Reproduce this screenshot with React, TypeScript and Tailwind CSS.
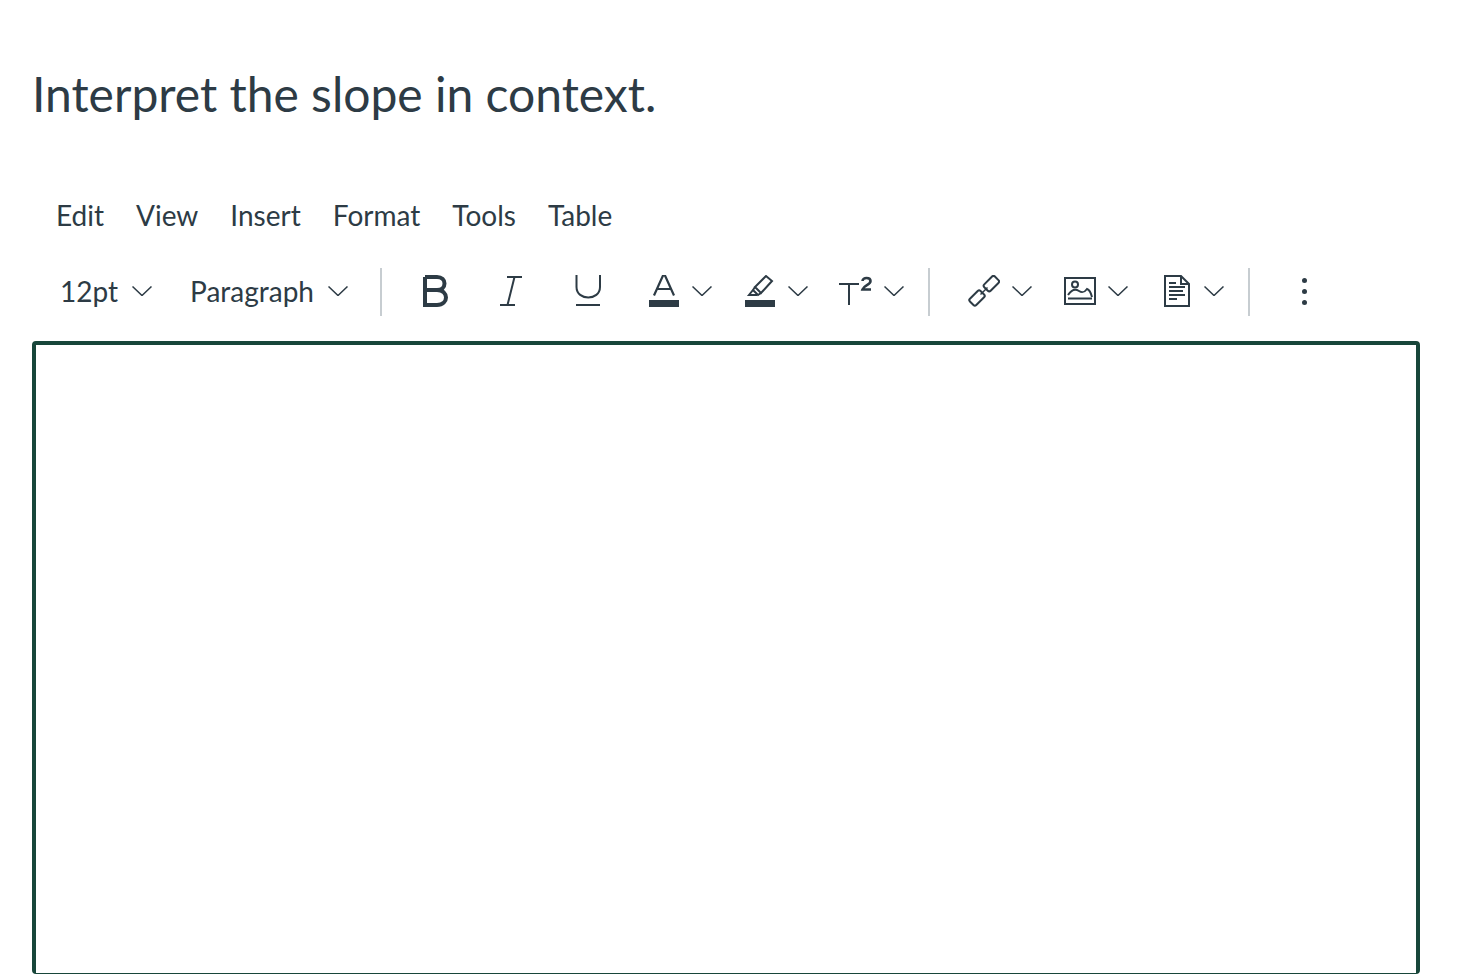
import React from 'react';

const Chevron: React.FC<{ className?: string }> = ({ className = '' }) => (
  <svg width="20" height="10" viewBox="0 0 20 10" fill="none" stroke="#2d3b45" strokeWidth="1.5" className={`shrink-0 ${className}`}>
    <path d="M0.5 0.5 L10 9.5 L19.5 0.5" />
  </svg>
);

const Separator: React.FC<{ className?: string }> = ({ className = '' }) => (
  <div className={`h-12 w-0.5 shrink-0 self-start bg-[#c7cdd1] ${className}`} />
);

const menuItems = ['Edit', 'View', 'Insert', 'Format', 'Tools', 'Table'];

const App: React.FC = () => {
  return (
    <div className="h-[974px] w-[1460px] overflow-hidden bg-white font-['Lato',sans-serif] text-[#2d3b45]">
      <div className="pl-8 pt-[63px]">
        <h1 className="h-[62px] text-[48px] leading-[62px] font-normal">Interpret the slope in context.</h1>

        <div className="mt-[70px] flex h-10 items-center gap-8 pl-6 text-[28px] leading-10">
          {menuItems.map((item) => (
            <span key={item}>{item}</span>
          ))}
        </div>

        <div className="mt-[33px] flex h-12 items-center pb-0.5">
          <span className="ml-7 text-[28px] leading-[46px]">12pt</span>
          <Chevron className="ml-[14px]" />
          <span className="ml-[38px] text-[28px] leading-[46px]">Paragraph</span>
          <Chevron className="ml-[14px]" />
          <Separator className="ml-[32px]" />

          {/* bold */}
          <svg width="28" height="32" viewBox="0 0 28 32" fill="none" stroke="#2d3b45" strokeWidth="4" className="ml-[40px] shrink-0">
            <path d="M3 2 H15 C25 2 25 15 15 15 H3 M15 15 C27 15 27 30 15 30 H3 V2" />
          </svg>
          {/* italic */}
          <svg width="24" height="32" viewBox="0 0 24 32" fill="none" stroke="#2d3b45" strokeWidth="2" className="ml-[49px] shrink-0">
            <path d="M8 2 H23 M1 30 H16 M15.5 2 L8.5 30" />
          </svg>
          {/* underline */}
          <svg width="26" height="32" viewBox="0 0 26 32" fill="none" stroke="#2d3b45" strokeWidth="2" className="ml-[52px] shrink-0">
            <path d="M1.5 0 V12 C1.5 26 25 26 25 12 V0" />
            <path d="M1 30 H25" />
          </svg>
          {/* text color */}
          <svg width="30" height="32" viewBox="0 0 30 32" fill="none" stroke="#2d3b45" strokeWidth="2.2" className="ml-[48px] shrink-0">
            <path d="M5 20.5 L14 0.5 H16 L25 20.5 M8 14 H22" />
            <rect x="0" y="25" width="30" height="7" fill="#2d3b45" stroke="none" />
          </svg>
          <Chevron className="ml-[13px]" />
          {/* highlight */}
          <svg width="30" height="32" viewBox="0 0 30 32" fill="none" stroke="#2d3b45" strokeWidth="2" className="ml-[33px] shrink-0">
            <path d="M21 1 L27 6 L16 18 L10 12 Z" />
            <path d="M10 12 L8 15 L13 20 L16 18" />
            <path d="M8 15 L4 20 H12" />
            <rect x="0" y="25" width="30" height="7" fill="#2d3b45" stroke="none" />
          </svg>
          <Chevron className="ml-[13px]" />
          {/* superscript */}
          <svg width="34" height="32" viewBox="0 0 34 32" fill="none" stroke="#2d3b45" strokeWidth="2" className="ml-[31px] shrink-0">
            <path d="M0 9 H20 M10 9 V30" />
            <path d="M23.5 6 C23.5 2 31.5 2 31.5 6 C31.5 10 25 10 23.5 14.5 H32" strokeWidth="2.6" />
          </svg>
          <Chevron className="ml-[11px]" />
          <Separator className="ml-[24px]" />

          {/* link */}
          <svg width="32" height="32" viewBox="0 0 32 32" fill="none" stroke="#2d3b45" strokeWidth="2" className="ml-[38px] shrink-0">
            <rect x="16" y="4.5" width="15" height="9" rx="2" transform="rotate(-45 23 9)" />
            <rect x="1.5" y="18.5" width="15" height="9" rx="2" transform="rotate(-45 9 23)" />
            <path d="M12.5 19.5 L19.5 12.5" strokeWidth="1.5" />
          </svg>
          <Chevron className="ml-[12px]" />
          {/* image */}
          <svg width="32" height="28" viewBox="0 0 32 28" fill="none" stroke="#2d3b45" strokeWidth="2" className="ml-[32px] shrink-0">
            <rect x="1" y="1" width="30" height="26" />
            <circle cx="11" cy="7.5" r="3" />
            <path d="M4 18 C8 12 12 12 15 14 C18 16 20 16 23 12 C26 13 27 16 28 20" />
            <path d="M4 21.5 H28" />
          </svg>
          <Chevron className="ml-[12px]" />
          {/* document */}
          <svg width="26" height="32" viewBox="0 0 26 32" fill="none" stroke="#2d3b45" strokeWidth="2" className="ml-[36px] shrink-0">
            <path d="M1 1 H17 L25 9 V31 H1 Z M17 1 V9 H25" />
            <path d="M5 8 H12 M5 12 H21 M5 16 H19 M5 20 H21 M5 24 H13" />
          </svg>
          <Chevron className="ml-[14px]" />
          <Separator className="ml-[24px]" />

          {/* more */}
          <div className="ml-[52px] flex shrink-0 flex-col gap-1.5">
            <span className="size-[5px] rounded-full bg-[#2d3b45]" />
            <span className="size-[5px] rounded-full bg-[#2d3b45]" />
            <span className="size-[5px] rounded-full bg-[#2d3b45]" />
          </div>
        </div>

        <div className="mt-[25px] h-[633px] w-[1388px] rounded-[4px] border-4 border-b border-[#18463a] bg-white" />
      </div>
    </div>
  );
};

export default App;
